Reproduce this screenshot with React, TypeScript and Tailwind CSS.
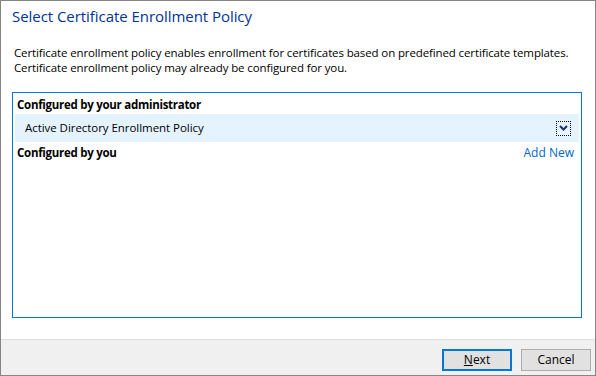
import React from 'react';

const font = "font-['Open_Sans',sans-serif]";

const Chevron: React.FC = () => (
  <svg width="9" height="6" viewBox="0 0 9 6" className="block">
    <path d="M1 1 L4.5 4.5 L8 1" fill="none" stroke="#1b2f7a" strokeWidth="2" />
  </svg>
);

const App: React.FC = () => {
  return (
    <div className={`w-[596px] h-[376px] border border-[#858585] bg-white flex flex-col text-black ${font}`}>
      <div className="pl-[11px] pt-[5px] text-[15px] leading-[20px] tracking-[-0.05px] text-[#003399]">
        Select Certificate Enrollment Policy
      </div>

      <div className="pl-[13px] mt-[19px] text-[11.5px] leading-[15px] tracking-[-0.12px] whitespace-nowrap">
        <p>Certificate enrollment policy enables enrollment for certificates based on predefined certificate templates.</p>
        <p>Certificate enrollment policy may already be configured for you.</p>
      </div>

      <div className="ml-[11px] mt-[17px] w-[570px] h-[226px] border border-[#0078d7] p-[2px] text-[11.5px]">
        <div className="h-[19px] flex items-center pl-[2px] font-bold tracking-[-0.28px]">Configured by your administrator</div>
        <div className="h-[28px] bg-[#e5f3ff] flex items-center justify-between pl-[10px] pr-[8px]">
          <span className="tracking-[-0.05px]">Active Directory Enrollment Policy</span>
          <button className="w-[15px] h-[15px] border border-dotted border-black flex items-center justify-center">
            <Chevron />
          </button>
        </div>
        <div className="h-[22px] flex items-center justify-between pl-[2px] pr-[5px]">
          <span className="font-bold tracking-[-0.28px]">Configured by you</span>
          <a className="text-[#0066cc] text-[12px] cursor-pointer">Add New</a>
        </div>
      </div>

      <div className="mt-auto h-[36px] border-t border-[#dfdfdf] bg-[#f0f0f0] flex justify-end items-start pt-[9px] pr-[4px] gap-[9px] text-[12px]">
        <button className="w-[70px] h-[22px] border-2 border-[#0078d7] bg-[#e1e1e1] flex items-center justify-center">
          <span><span className="underline">N</span>ext</span>
        </button>
        <button className="w-[70px] h-[22px] border border-[#adadad] bg-[#e1e1e1] flex items-center justify-center">
          Cancel
        </button>
      </div>
    </div>
  );
};

export default App;
